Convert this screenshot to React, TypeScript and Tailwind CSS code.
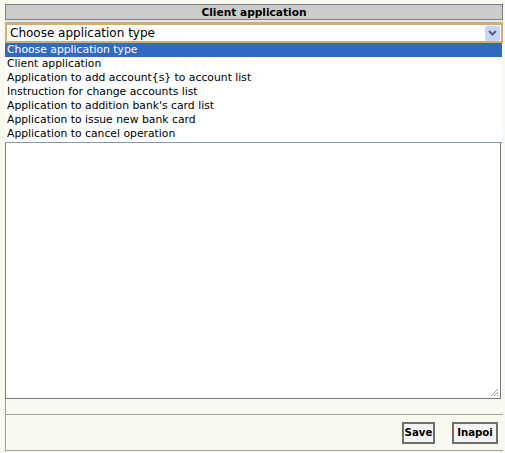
import React from 'react';

const items = [
  'Choose application type',
  'Client application',
  'Application to add account{s} to account list',
  'Instruction for change accounts list',
  "Application to addition bank's card list",
  'Application to issue new bank card',
  'Application to cancel operation',
];

function Chevron() {
  return (
    <svg width="9" height="6" viewBox="0 0 9 6" className="block">
      <path d="M1 1 L4.5 4.5 L8 1" fill="none" stroke="#4d6185" strokeWidth="2" />
    </svg>
  );
}

export default function App() {
  return (
    <div className="min-h-[453px] w-[505px] bg-[#f9f9ef] pl-[5px] pt-[4px] font-['DejaVu_Sans',sans-serif] text-black">
      <div className="w-[498px]">
        {/* header */}
        <div className="h-[16px] border border-[#808080] bg-[#cccccc] text-center text-[10.6px] leading-[14px] font-bold">
          Client application
        </div>
        <div className="h-[3px] border-b border-[#b0b0b0] bg-[#e8e8e0]" />

        {/* select + textarea */}
        <div className="relative">
          <div className="flex h-[20px] items-center justify-between border-2 border-[#d4ae62] bg-white pl-[3px] pr-[1px]">
            <span className="text-[12px] leading-[14px]">Choose application type</span>
            <div className="flex h-[15px] w-[15px] items-center justify-center rounded-[2px] bg-[#c6d6fb]">
              <Chevron />
            </div>
          </div>

          <div className="relative h-[356px] w-[496px] border border-[#7a7a7a] border-t-0 bg-white">
            <svg width="10" height="10" viewBox="0 0 10 10" className="absolute right-[1px] bottom-[1px]">
              <path d="M9 2 L2 9 M9 5 L5 9 M9 8 L8 9" stroke="#9a9a9a" strokeWidth="1" />
            </svg>
          </div>

          {/* open dropdown list */}
          <ul className="absolute left-0 top-[20px] w-[497px] border-b border-[#7f9db9] bg-white pb-[1px] text-[10.8px]">
            {items.map((t, i) => (
              <li
                key={t}
                className={
                  i === 0
                    ? 'h-[14px] bg-[#316ac5] pl-[2px] leading-[14px] text-white'
                    : 'h-[14px] pl-[2px] leading-[14px]'
                }
              >
                {t}
              </li>
            ))}
          </ul>
        </div>

        {/* footer rows */}
        <div className="h-[16px] border-l border-b border-[#a0a0a0]" />
        <div className="flex h-[36px] items-center justify-end gap-[17px] border-l border-b border-[#a0a0a0] pr-[5px]">
          <button className="h-[22px] w-[33px] border-2 border-[#6e6e6e] bg-[#f4f4f4] text-[10.2px] font-bold leading-[16px]">
            Save
          </button>
          <button className="h-[22px] w-[46px] border-2 border-[#6e6e6e] bg-[#f4f4f4] text-[10.2px] font-bold leading-[16px]">
            Inapoi
          </button>
        </div>
      </div>
    </div>
  );
}
